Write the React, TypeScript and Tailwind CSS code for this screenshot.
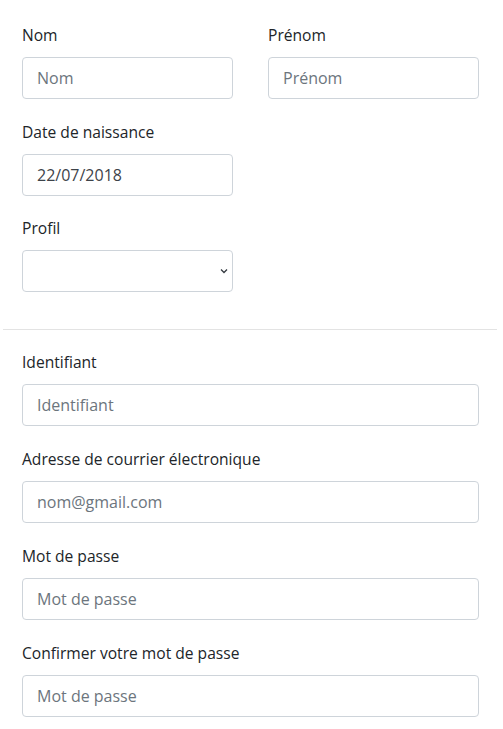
import React from "react";

const fields = [
  { label: "Identifiant", placeholder: "Identifiant", type: "text" },
  { label: "Adresse de courrier électronique", placeholder: "nom@gmail.com", type: "email" },
  { label: "Mot de passe", placeholder: "Mot de passe", type: "password" },
  { label: "Confirmer votre mot de passe", placeholder: "Mot de passe", type: "password" },
];

const inputCls =
  "block w-full h-[42px] px-[14px] rounded-[4px] border border-[#ced4da] bg-white text-[16px] text-[#3d4349] placeholder:text-[#6c757d] outline-none";

function Label({ children }: { children: React.ReactNode }) {
  return <label className="block h-6 leading-6 mb-[10px] text-[15.6px] text-[#212529]">{children}</label>;
}

export default function App() {
  return (
    <div className="w-[503px] min-h-[729px] bg-white pt-[23px] font-['Open_Sans',sans-serif]">
      <div className="ml-[22px] w-[457px]">
        <div className="grid grid-cols-2 gap-x-[35px]">
          <div className="mb-[21px]">
            <Label>Nom</Label>
            <input className={inputCls} placeholder="Nom" />
          </div>
          <div className="mb-[21px]">
            <Label>Prénom</Label>
            <input className={inputCls} placeholder="Prénom" />
          </div>
          <div className="mb-5">
            <Label>Date de naissance</Label>
            <input className={inputCls} defaultValue="22/07/2018" />
          </div>
          <div />
          <div>
            <Label>Profil</Label>
            <div className="relative">
              <select className={inputCls + " appearance-none"} defaultValue="">
                <option value=""></option>
              </select>
              <svg
                className="absolute right-[5px] top-[18px] pointer-events-none"
                width="8"
                height="6"
                viewBox="0 0 8 6"
                fill="none"
                stroke="#343a40"
                strokeWidth="1.3"
              >
                <path d="M1 1.5l3 3 3-3" />
              </svg>
            </div>
          </div>
        </div>
      </div>

      <hr className="ml-[3px] mr-[6px] mt-[37px] mb-5 border-0 border-t border-[#e3e3e3]" />

      <div className="ml-[22px] w-[457px]">
        {fields.map((f) => (
          <div key={f.label} className="mb-[21px]">
            <Label>{f.label}</Label>
            <input className={inputCls} type={f.type === "password" ? "text" : f.type} placeholder={f.placeholder} />
          </div>
        ))}
      </div>
    </div>
  );
}
